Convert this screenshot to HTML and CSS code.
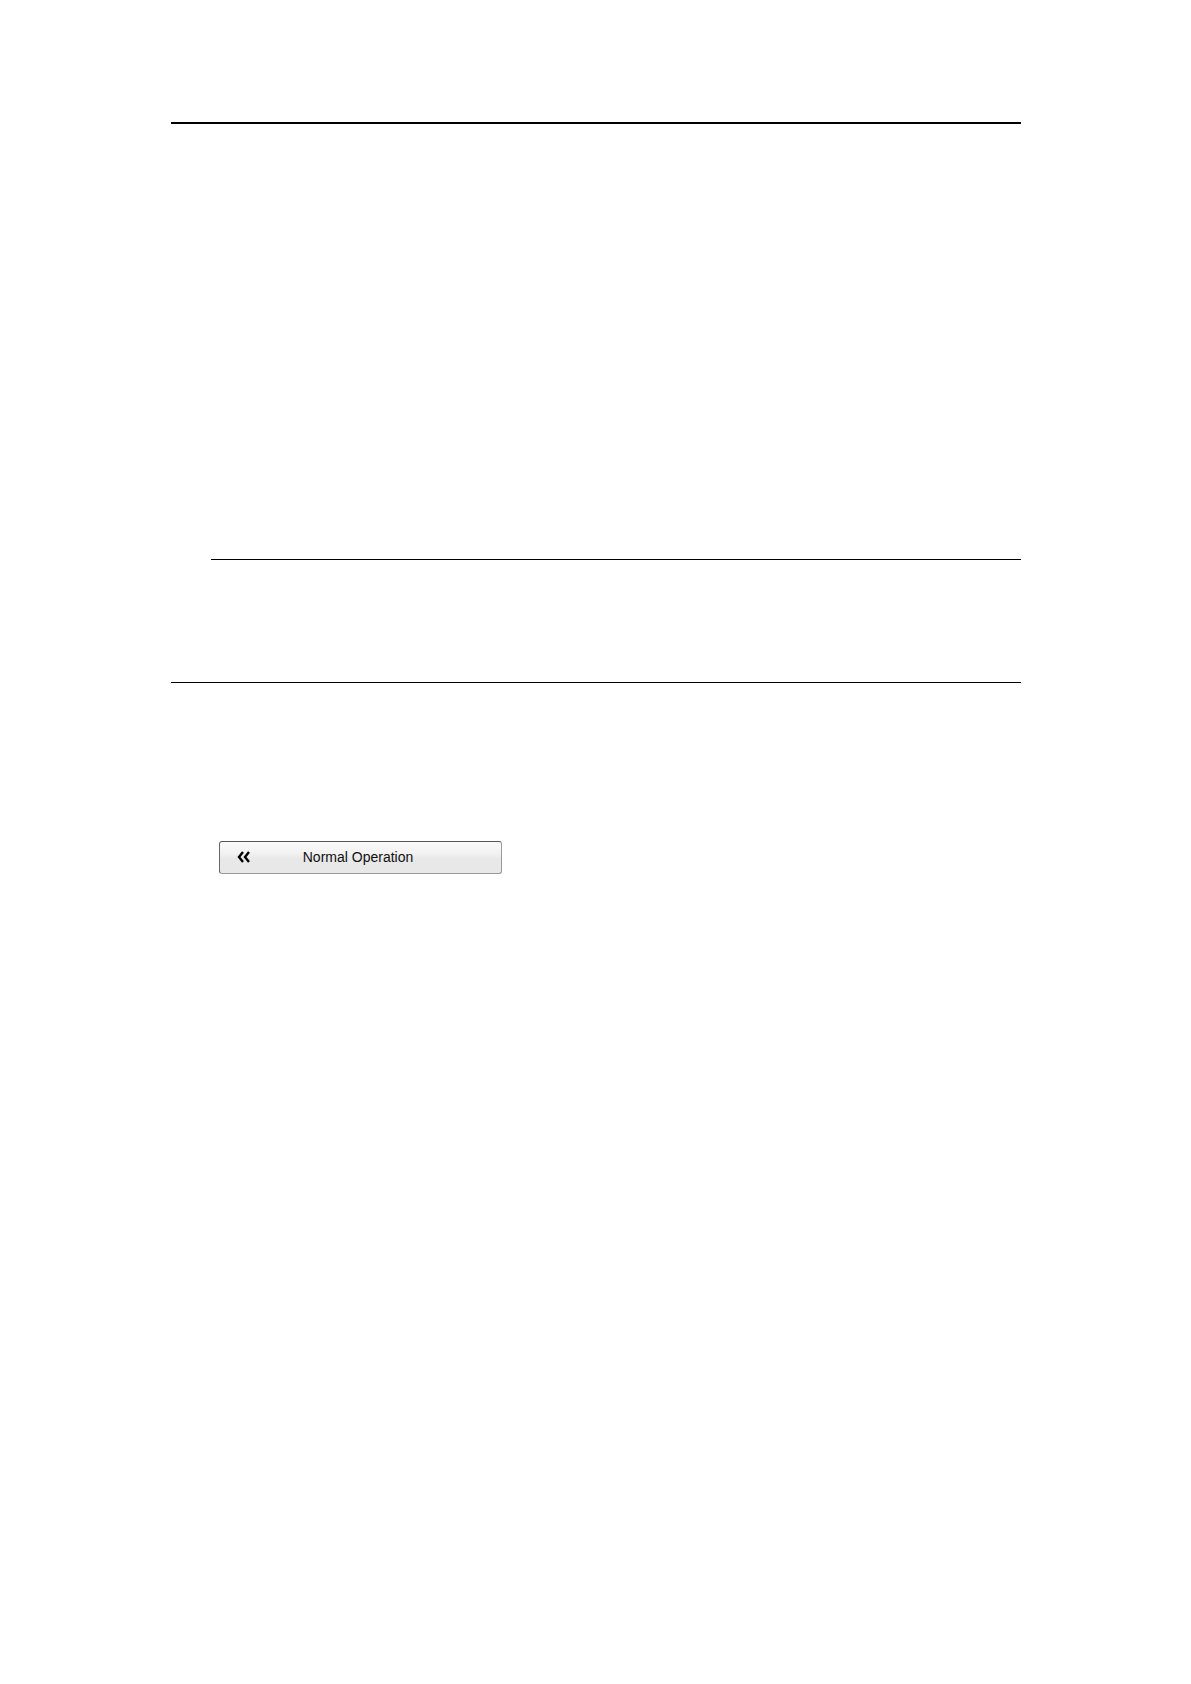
FILE: index.html
```html
<!DOCTYPE html>
<html lang="en">
<head>
    <meta charset="UTF-8">
    <meta name="viewport" content="width=device-width, initial-scale=1.0">
    <title>Normal Operation</title>
    <link rel="stylesheet" href="styles.css">
</head>
<body>
    <main class="page">
        <hr class="rule header-rule">

        <section class="topic">
            <hr class="rule note-rule">
        </section>

        <hr class="rule section-rule">

        <section class="operation">
            <button type="button" class="menu-button">
                <svg class="menu-icon" width="13" height="12" viewBox="0 0 13 12" aria-hidden="true">
                    <path d="M6 1L2 6L6 11M12 1L8 6L12 11"/>
                </svg>
                <span class="menu-label">Normal Operation</span>
            </button>
        </section>
    </main>
</body>
</html>
```

FILE: styles.css
```css
body {
    margin: 0;
    background-color: #fff;
    color: #000;
    font-family: "Liberation Sans", Arial, sans-serif;
}

.page {
    max-width: 850px;
    margin: 0 auto;
    padding: 122px 20px;
}

/* Horizontal rules */
.rule {
    margin: 0;
    border: none;
    border-top: 1px solid #000;
}

.header-rule {
    border-top-width: 2px;
}

.topic {
    padding: 435px 0 122px 40px;
}

.operation {
    padding: 158px 0 0 48px;
}

/* Menu button */
.menu-button {
    display: grid;
    grid-template-columns: 30px 1fr 30px;
    align-items: center;
    width: 283px;
    max-width: 100%;
    height: 33px;
    padding: 0 0 2px;
    border: 1px solid #999;
    border-top-color: #555;
    border-left-color: #666;
    border-radius: 3px;
    background: linear-gradient(#fafafa, #f2f2f2 35%, #e8e8e8 55%, #e8e8e8);
    color: #111;
    font-family: inherit;
    font-size: 14px;
    line-height: 16px;
    cursor: pointer;
}

.menu-icon {
    justify-self: end;
    fill: none;
    stroke: #000;
    stroke-width: 2.4;
}

.menu-label {
    padding-right: 4px;
}
```
